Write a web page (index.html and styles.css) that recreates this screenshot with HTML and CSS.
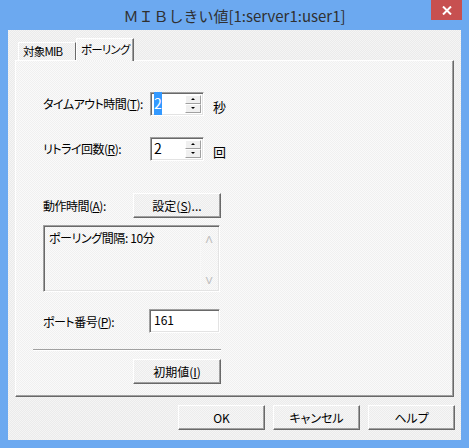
FILE: index.html
```html
<!DOCTYPE html>
<html lang="ja">
<head>
    <meta charset="UTF-8">
    <title>MIBしきい値</title>
    <link rel="stylesheet" href="styles.css">
</head>
<body>
    <div class="window">
        <div class="titlebar">
            <span></span>
            <span class="title">ＭＩＢしきい値[1:server1:user1]</span>
            <span class="close">
                <svg width="10" height="9" viewBox="0 0 10 9">
                    <path d="M1 0.5 L9 8.5 M9 0.5 L1 8.5" stroke="#fff" stroke-width="2"/>
                </svg>
            </span>
        </div>
        <div class="client">
            <div class="tabs">
                <div class="tab">対象MIB</div>
                <div class="tab active">ポーリング</div>
            </div>
            <div class="panel">
                <div class="row first">
                    <span class="lbl">タイムアウト時間(<u>T</u>):</span>
                    <div class="spin">
                        <div class="spin-text"><span class="sel">2</span></div>
                        <div class="spin-btns">
                            <span class="sbtn"><i class="up"></i></span>
                            <span class="sbtn"><i class="down"></i></span>
                        </div>
                    </div>
                    <span class="unit">秒</span>
                </div>
                <div class="row retry">
                    <span class="lbl">リトライ回数(<u>R</u>):</span>
                    <div class="spin">
                        <div class="spin-text">2</div>
                        <div class="spin-btns">
                            <span class="sbtn"><i class="up"></i></span>
                            <span class="sbtn"><i class="down"></i></span>
                        </div>
                    </div>
                    <span class="unit">回</span>
                </div>
                <div class="row action">
                    <span class="lbl short">動作時間(<u>A</u>):</span>
                    <button class="btn">設定(<u>S</u>)...</button>
                </div>
                <div class="listbox">
                    <div class="list-text">ポーリング間隔: 10分</div>
                    <div class="vscroll">
                        <span class="chev">&#x2C4;</span>
                        <span class="chev">&#x2C5;</span>
                    </div>
                </div>
                <div class="row port">
                    <span class="lbl port-lbl">ポート番号(<u>P</u>):</span>
                    <div class="edit">161</div>
                </div>
                <div class="sep"></div>
                <div class="row reset">
                    <button class="btn">初期値(<u>I</u>)</button>
                </div>
            </div>
            <div class="footer">
                <button class="btn wide">OK</button>
                <button class="btn wide">キャンセル</button>
                <button class="btn wide">ヘルプ</button>
            </div>
        </div>
    </div>
</body>
</html>
```

FILE: styles.css
```css
body {
    margin: 0;
    font-family: "Noto Sans CJK JP", "Liberation Sans", sans-serif;
    font-size: 12px;
    font-feature-settings: "palt" 1;
    color: #000;
}

.window {
    display: flex;
    flex-direction: column;
    width: 469px;
    height: 448px;
    background-color: #6ca9f0;
}

.titlebar {
    display: grid;
    grid-template-columns: 1fr auto 1fr;
    height: 30px;
}

.titlebar .title {
    font-size: 15px;
    font-feature-settings: normal;
    color: #303030;
    line-height: 30px;
    padding-top: 1px;
    white-space: nowrap;
}

.titlebar .close {
    justify-self: end;
    align-self: start;
    display: flex;
    align-items: center;
    justify-content: center;
    width: 31px;
    height: 20px;
    margin-right: 7px;
    background-color: #c75050;
}

.client {
    flex: 1;
    display: flex;
    flex-direction: column;
    margin: 0 8px 8px;
    padding-top: 9px;
    background: repeating-conic-gradient(#ebebeb 0 25%, #f5f5f5 0 50%) 0 0 / 2px 2px;
}

.tabs {
    display: flex;
    align-items: flex-end;
    padding-left: 10px;
    height: 22px;
    position: relative;
    z-index: 1;
    margin-bottom: -1px;
}

.tab {
    width: 58px;
    height: 18px;
    box-sizing: border-box;
    border-top: 1px solid #fff;
    border-left: 1px solid #fff;
    border-right: 1px solid #696969;
    font-size: 11.5px;
    letter-spacing: -0.8px;
    line-height: 17px;
    padding-left: 4px;
    margin-bottom: 1px;
    white-space: nowrap;
    overflow: hidden;
}

.tab.active {
    height: 23px;
    margin-bottom: 0;
    padding-left: 4px;
    line-height: 20px;
    box-shadow: inset -1px 0 #a0a0a0;
    background: repeating-conic-gradient(#f0f0f0 0 25%, #fafafa 0 50%) 0 0 / 2px 2px;
}

.panel {
    height: 337px;
    box-sizing: border-box;
    margin: 0 7px;
    padding: 30px 0 0 27px;
    border-top: 1px solid #fff;
    border-left: 1px solid #fff;
    border-right: 1px solid #696969;
    border-bottom: 1px solid #696969;
    box-shadow: inset -1px -1px #a0a0a0;
    background: repeating-conic-gradient(#f0f0f0 0 25%, #fafafa 0 50%) 0 0 / 2px 2px;
}

.row {
    display: flex;
    align-items: center;
}

.retry {
    margin-top: 20px;
}

.action {
    margin-top: 32px;
}

.port {
    margin-top: 17px;
}

.reset {
    margin-top: 8px;
    padding-left: 90px;
}

.lbl {
    width: 107px;
    letter-spacing: -0.5px;
    white-space: nowrap;
}

.lbl.short {
    width: 90px;
}

.lbl.port-lbl {
    width: 106px;
}

.spin {
    display: flex;
    width: 54px;
    height: 24px;
    box-sizing: border-box;
    border-top: 1px solid #a0a0a0;
    border-left: 1px solid #a0a0a0;
    border-right: 1px solid #fff;
    border-bottom: 1px solid #fff;
    box-shadow: inset 1px 1px #696969, inset -1px -1px #e3e3e3;
    background-color: #fff;
    padding: 2px;
}

.spin-text {
    flex: 1;
    font-size: 14px;
    line-height: 17px;
    padding-left: 1px;
}

.sel {
    background-color: #3399ff;
    color: #fff;
    padding: 1px 0 2px;
}

.spin-btns {
    display: flex;
    flex-direction: column;
    width: 16px;
}

.sbtn {
    flex: 1;
    display: flex;
    align-items: center;
    justify-content: center;
    border-top: 1px solid #fff;
    border-left: 1px solid #fff;
    border-right: 1px solid #a0a0a0;
    border-bottom: 1px solid #a0a0a0;
    background-color: #f0f0f0;
}

.sbtn i {
    width: 0;
    height: 0;
    border-left: 2px solid transparent;
    border-right: 2px solid transparent;
}

.sbtn .up {
    border-bottom: 2px solid #000;
}

.sbtn .down {
    border-top: 2px solid #000;
}

.unit {
    margin-left: 9px;
    padding-top: 6px;
    font-size: 13px;
}

.btn {
    width: 88px;
    height: 25px;
    box-sizing: border-box;
    padding: 0;
    font-family: inherit;
    font-size: 12px;
    font-feature-settings: "palt" 1;
    color: #000;
    border-top: 1px solid #fff;
    border-left: 1px solid #fff;
    border-right: 1px solid #696969;
    border-bottom: 1px solid #696969;
    box-shadow: inset -1px -1px #a0a0a0;
    background: repeating-conic-gradient(#ececec 0 25%, #f6f6f6 0 50%) 0 0 / 2px 2px;
}

.btn.wide {
    width: 87px;
}

.listbox {
    display: flex;
    width: 177px;
    height: 67px;
    box-sizing: border-box;
    margin-top: 7px;
    border-top: 1px solid #a0a0a0;
    border-left: 1px solid #a0a0a0;
    border-right: 1px solid #fff;
    border-bottom: 1px solid #fff;
    box-shadow: inset 1px 1px #696969, inset -1px -1px #e3e3e3;
    padding: 2px;
}

.list-text {
    flex: 1;
    padding: 1px 0 0 3px;
    letter-spacing: -0.4px;
    white-space: nowrap;
}

.vscroll {
    width: 16px;
    display: flex;
    flex-direction: column;
    justify-content: space-between;
    align-items: center;
    border-left: 1px solid #f8f8f8;
    color: #c0c0c0;
    font-size: 14px;
    line-height: 14px;
    padding: 4px 0 2px;
}

.edit {
    width: 71px;
    height: 24px;
    box-sizing: border-box;
    border-top: 1px solid #a0a0a0;
    border-left: 1px solid #a0a0a0;
    border-right: 1px solid #fff;
    border-bottom: 1px solid #fff;
    box-shadow: inset 1px 1px #696969, inset -1px -1px #e3e3e3;
    background-color: #fff;
    padding: 1px 0 0 4px;
    line-height: 17px;
}

.sep {
    width: 188px;
    height: 1px;
    margin: 16px 0 0 -10px;
    background-color: #a0a0a0;
    border-bottom: 1px solid #fff;
}

.footer {
    display: flex;
    justify-content: flex-end;
    gap: 8px;
    margin-top: 8px;
    padding-right: 6px;
}
```
